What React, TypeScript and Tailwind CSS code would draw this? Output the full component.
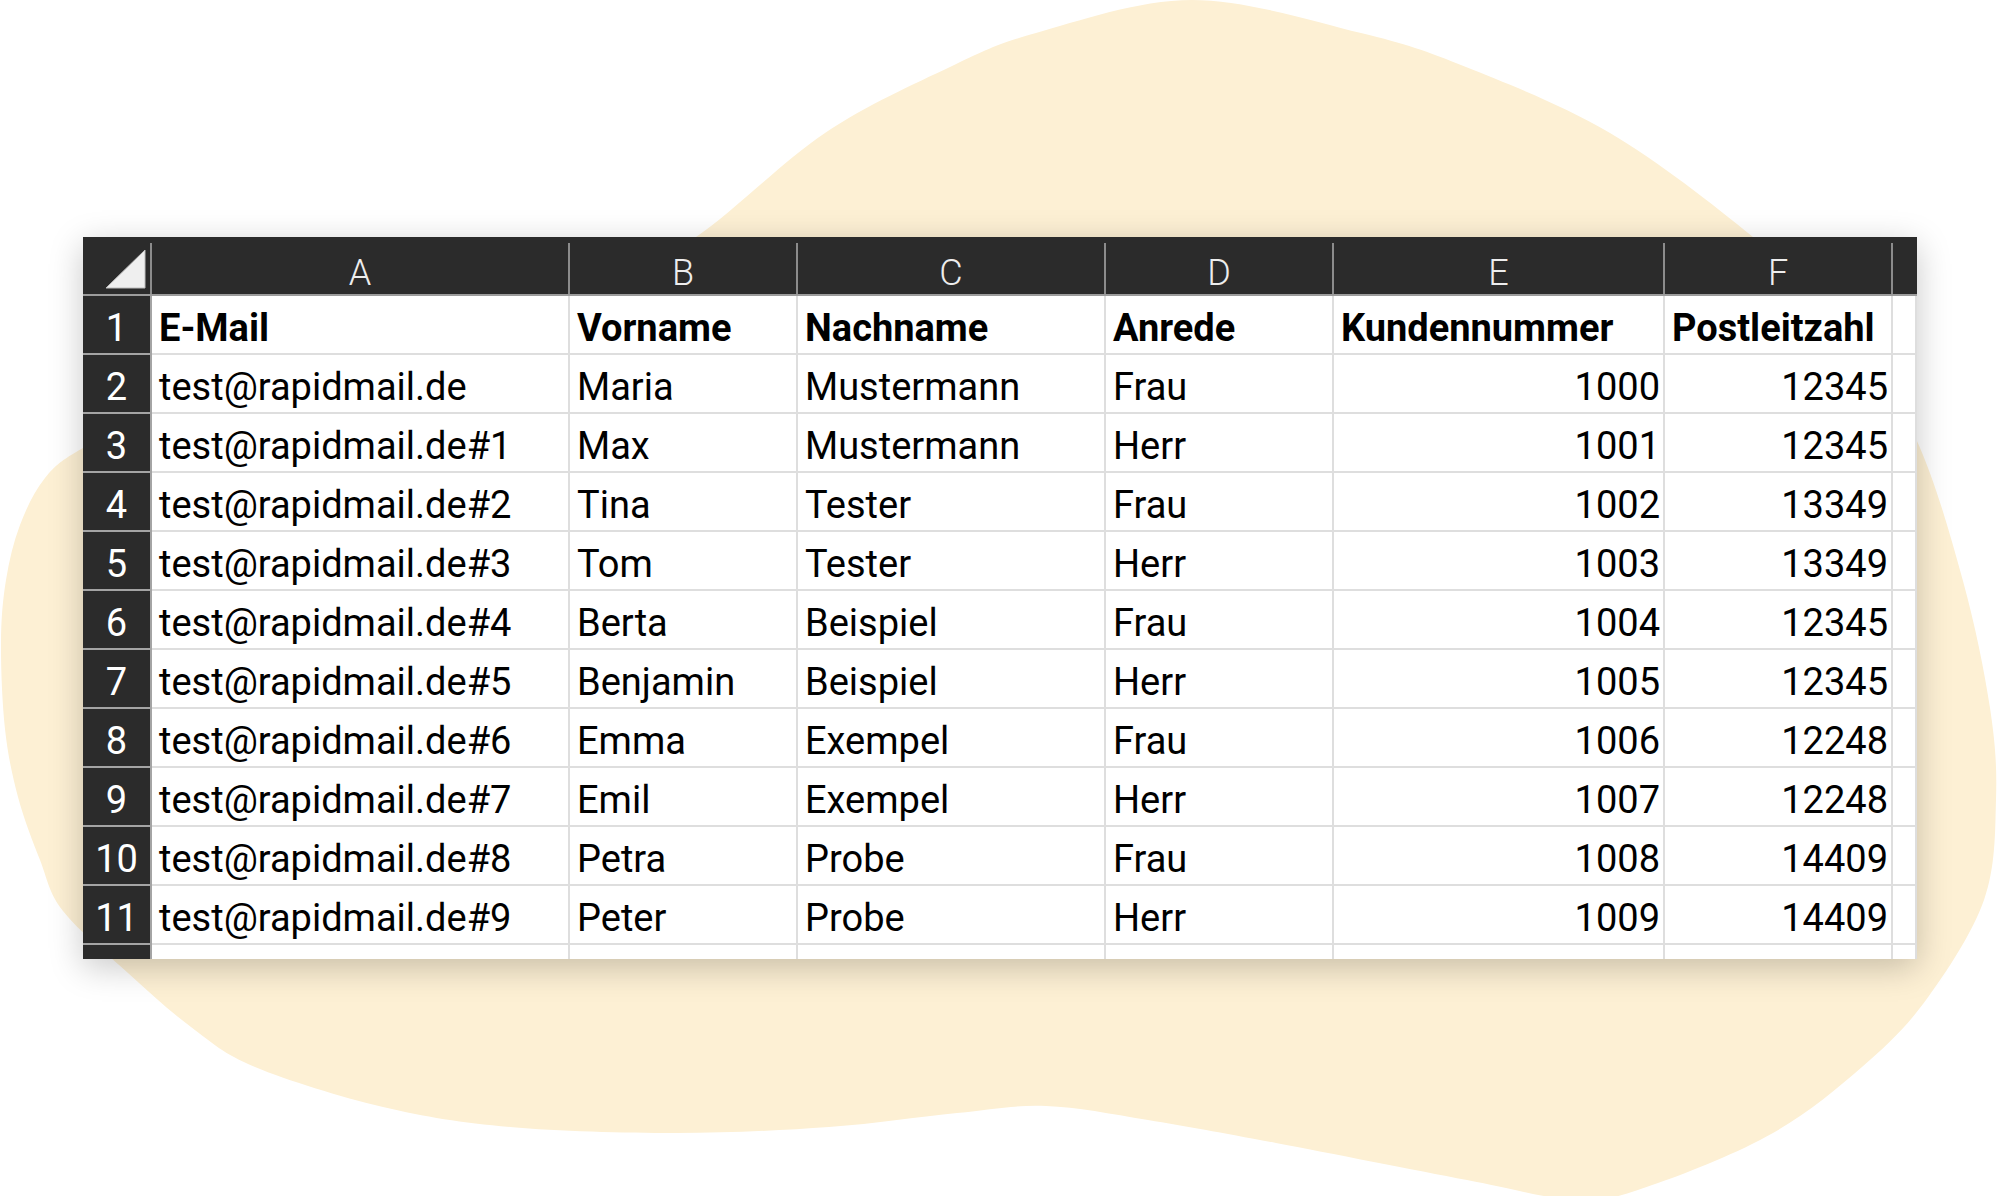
import React from 'react';

const columns = [
  { letter: 'A', numeric: false },
  { letter: 'B', numeric: false },
  { letter: 'C', numeric: false },
  { letter: 'D', numeric: false },
  { letter: 'E', numeric: true },
  { letter: 'F', numeric: true },
];

const titles = ['E-Mail', 'Vorname', 'Nachname', 'Anrede', 'Kundennummer', 'Postleitzahl'];

const rows = [
  ['test@rapidmail.de', 'Maria', 'Mustermann', 'Frau', '1000', '12345'],
  ['test@rapidmail.de#1', 'Max', 'Mustermann', 'Herr', '1001', '12345'],
  ['test@rapidmail.de#2', 'Tina', 'Tester', 'Frau', '1002', '13349'],
  ['test@rapidmail.de#3', 'Tom', 'Tester', 'Herr', '1003', '13349'],
  ['test@rapidmail.de#4', 'Berta', 'Beispiel', 'Frau', '1004', '12345'],
  ['test@rapidmail.de#5', 'Benjamin', 'Beispiel', 'Herr', '1005', '12345'],
  ['test@rapidmail.de#6', 'Emma', 'Exempel', 'Frau', '1006', '12248'],
  ['test@rapidmail.de#7', 'Emil', 'Exempel', 'Herr', '1007', '12248'],
  ['test@rapidmail.de#8', 'Petra', 'Probe', 'Frau', '1008', '14409'],
  ['test@rapidmail.de#9', 'Peter', 'Probe', 'Herr', '1009', '14409'],
];

// outline of the cream blob behind the sheet, smoothed with catmull-rom
const blobPoints = [
  [1192, 0], [1361, 33], [1466, 67], [1610, 133], [1753, 237], [1850, 330],
  [1917, 441], [1963, 581], [1990, 708], [1996, 800], [1984, 900], [1926, 1000],
  [1862, 1067], [1773, 1133], [1658, 1183], [1580, 1200], [1467, 1180], [1276, 1143],
  [1148, 1120], [1046, 1106], [957, 1113], [829, 1127], [676, 1133], [510, 1127],
  [383, 1107], [255, 1067], [191, 1027], [128, 973], [63, 911], [40, 860],
  [18, 797], [5, 729], [1, 643], [6, 580], [20, 525], [45, 478], [83, 448],
  [180, 400], [400, 340], [600, 285], [696, 237], [825, 133], [950, 67], [1036, 33],
];

function smoothPath(pts: number[][]) {
  const n = pts.length;
  const f = (v: number) => v.toFixed(1);
  let d = `M${pts[0][0]},${pts[0][1]}`;
  for (let i = 0; i < n; i++) {
    const p0 = pts[(i - 1 + n) % n];
    const p1 = pts[i];
    const p2 = pts[(i + 1) % n];
    const p3 = pts[(i + 2) % n];
    const c1x = p1[0] + (p2[0] - p0[0]) / 6;
    const c1y = p1[1] + (p2[1] - p0[1]) / 6;
    const c2x = p2[0] - (p3[0] - p1[0]) / 6;
    const c2y = p2[1] - (p3[1] - p1[1]) / 6;
    d += ` C${f(c1x)},${f(c1y)} ${f(c2x)},${f(c2y)} ${p2[0]},${p2[1]}`;
  }
  return d + ' Z';
}

const blobPath = smoothPath(blobPoints);

function ColumnHeader({ letter, last }: { letter?: string; last?: boolean }) {
  return (
    <div className="h-[59px] bg-[#2b2b2b] border-b-2 border-[#9c9c9c] pt-[6px] flex">
      <div
        className={`flex-1 flex items-end justify-center pb-[6px] text-[36px] leading-[30px] font-light text-[#ededed] ${
          last ? '' : 'border-r-2 border-[#8c8c8c]'
        }`}
      >
        {letter}
      </div>
    </div>
  );
}

function RowHeader({ n }: { n?: number }) {
  return (
    <div className="h-[59px] bg-[#2b2b2b] border-b-2 border-r-2 border-[#a4a4a4] flex items-end justify-center pb-[2px] text-[38px] leading-[46px] text-white">
      {n}
    </div>
  );
}

function Cell({ text, right, bold }: { text: string; right?: boolean; bold?: boolean }) {
  return (
    <div
      className={`h-[59px] bg-white border-b-2 border-r-2 border-[#dedede] flex items-end pb-[2px] text-[38px] leading-[46px] text-black whitespace-nowrap overflow-hidden ${
        right ? 'justify-end pr-[3px]' : 'pl-[7px]'
      } ${bold ? 'font-bold' : ''}`}
    >
      {text}
    </div>
  );
}

export default function App() {
  return (
    <div className="relative w-[2000px] h-[1196px] overflow-hidden bg-white">
      <svg className="absolute inset-0" width="2000" height="1196" viewBox="0 0 2000 1196">
        <path d={blobPath} fill="#fdf0d4" />
      </svg>

      <div className="relative pl-[83px] pt-[237px]">
        <div className="w-[1834px] h-[722px] overflow-hidden shadow-[0_8px_32px_rgba(0,0,0,0.22)] font-['Roboto','Liberation_Sans',sans-serif]">
          <div className="grid grid-cols-[69px_418px_228px_308px_228px_331px_228px_24px]">
            {/* corner */}
            <div className="h-[59px] bg-[#2b2b2b] border-b-2 border-[#9c9c9c] pt-[6px] flex">
              <div className="flex-1 border-r-2 border-[#8c8c8c] flex items-end justify-end pr-[4px] pb-[5px]">
                <svg width="40" height="39" viewBox="0 0 40 39">
                  <polygon points="0,38 39,38 39,0" fill="#efefef" stroke="#bdbdbd" strokeWidth="1" />
                </svg>
              </div>
            </div>
            {columns.map((c) => (
              <ColumnHeader key={c.letter} letter={c.letter} />
            ))}
            <ColumnHeader last />

            <RowHeader n={1} />
            {titles.map((t) => (
              <Cell key={t} text={t} bold />
            ))}
            <Cell text="" />

            {rows.map((r, i) => (
              <React.Fragment key={i}>
                <RowHeader n={i + 2} />
                {r.map((v, j) => (
                  <Cell key={j} text={v} right={columns[j].numeric} />
                ))}
                <Cell text="" />
              </React.Fragment>
            ))}

            <RowHeader />
            {columns.map((c) => (
              <Cell key={c.letter} text="" />
            ))}
            <Cell text="" />
          </div>
        </div>
      </div>
    </div>
  );
}
